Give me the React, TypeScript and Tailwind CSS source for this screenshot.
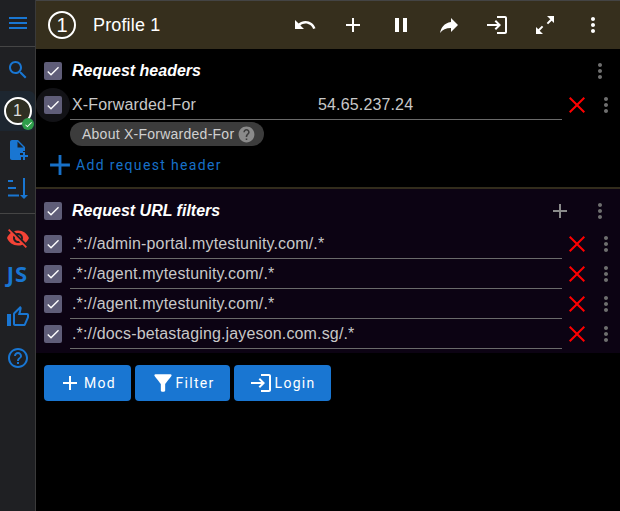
import type { ReactNode } from "react";

const paths = {
  menu: "M3 18h18v-2H3v2zm0-5h18v-2H3v2zm0-7v2h18V6H3z",
  search:
    "M15.5 14h-.79l-.28-.27C15.41 12.59 16 11.11 16 9.5 16 5.91 13.09 3 9.5 3S3 5.91 3 9.5 5.91 16 9.5 16c1.61 0 3.09-.59 4.23-1.57l.27.28v.79l5 4.99L20.49 19l-4.99-5zm-6 0C7.01 14 5 11.99 5 9.5S7.01 5 9.5 5 14 7.01 14 9.5 11.99 14 9.5 14z",
  undo: "M12.5 8c-2.65 0-5.05.99-6.9 2.6L2 7v9h9l-3.62-3.62c1.39-1.16 3.16-1.88 5.12-1.88 3.54 0 6.55 2.31 7.6 5.5l2.37-.78C21.08 11.03 17.15 8 12.5 8z",
  add: "M19 13h-6v6h-2v-6H5v-2h6V5h2v6h6v2z",
  pause: "M6 19h4V5H6v14zm8-14v14h4V5h-4z",
  forward: "M14 9V5l7 7-7 7v-4.1c-5 0-8.5 1.6-11 5.1 1-5 4-10 11-11z",
  login:
    "M11 7 9.6 8.4l2.6 2.6H2v2h10.2l-2.6 2.6L11 17l5-5-5-5zm9 12h-8v2h8c1.1 0 2-.9 2-2V5c0-1.1-.9-2-2-2h-8v2h8v14z",
  expand: "M14 3h7v7l-2.3-2.3-3.6 3.6-1.4-1.4 3.6-3.6zM10 21H3v-7l2.3 2.3 3.6-3.6 1.4 1.4-3.6 3.6z",
  more: "M12 8c1.1 0 2-.9 2-2s-.9-2-2-2-2 .9-2 2 .9 2 2 2zm0 2c-1.1 0-2 .9-2 2s.9 2 2 2 2-.9 2-2-.9-2-2-2zm0 6c-1.1 0-2 .9-2 2s.9 2 2 2 2-.9 2-2-.9-2-2-2z",
  close: "M20 5.4 18.6 4 12 10.6 5.4 4 4 5.4l6.6 6.6L4 18.6 5.4 20l6.6-6.6 6.6 6.6 1.4-1.4-6.6-6.6z",
  noteAdd:
    "M12 2H6c-1.1 0-2 .9-2 2v16c0 1.1.9 2 2 2h9v-3h-1v-4h3v-2h2V9l-7-7zm-.5 7.5V3.5l6 6h-6zM19 14h-2v3h-3v2h3v3h2v-3h3v-2h-3z",
  sort: "M2 4h5v2H2zM2 11h8v2H2zM2 18.5h11v2H2zM17 2h2v17h3l-4 4-4-4h3z",
  eyeOff:
    "M12 7c2.76 0 5 2.24 5 5 0 .65-.13 1.26-.36 1.83l2.92 2.92c1.51-1.26 2.7-2.89 3.43-4.75-1.73-4.39-6-7.5-11-7.5-1.4 0-2.74.25-3.98.7l2.16 2.16C10.74 7.13 11.35 7 12 7zM2 4.27l2.28 2.28.46.46C3.08 8.3 1.78 10.02 1 12c1.73 4.39 6 7.5 11 7.5 1.55 0 3.03-.3 4.38-.84l.42.42L19.73 22 21 20.73 3.27 3 2 4.27zM7.53 9.8l1.55 1.55c-.05.21-.08.43-.08.65 0 1.66 1.34 3 3 3 .22 0 .44-.03.65-.08l1.55 1.55c-.67.33-1.41.53-2.2.53-2.76 0-5-2.24-5-5 0-.79.2-1.53.53-2.2zm4.31-.78 3.15 3.15.02-.16c0-1.66-1.34-3-3-3l-.17.01z",
  thumb:
    "M9 21h9c.83 0 1.54-.5 1.84-1.22l3.02-7.05c.09-.23.14-.47.14-.73v-2c0-1.1-.9-2-2-2h-6.31l.95-4.57.03-.32c0-.41-.17-.79-.44-1.06L14.17 1 7.58 7.59C7.22 7.95 7 8.45 7 9v10c0 1.1.9 2 2 2zM9 9l4.34-4.34L12 10h9v2l-3 7H9V9zM1 9h4v12H1z",
  help: "M11 18h2v-2h-2v2zm1-16C6.48 2 2 6.48 2 12s4.48 10 10 10 10-4.48 10-10S17.52 2 12 2zm0 18c-4.41 0-8-3.59-8-8s3.59-8 8-8 8 3.59 8 8-3.59 8-8 8zm0-14c-2.21 0-4 1.79-4 4h2c0-1.1.9-2 2-2s2 .9 2 2c0 2-3 1.75-3 5h2c0-2.25 3-2.5 3-5 0-2.21-1.79-4-4-4z",
  helpSolid:
    "M12 2C6.48 2 2 6.48 2 12s4.48 10 10 10 10-4.48 10-10S17.52 2 12 2zm1 17h-2v-2h2v2zm2.07-7.75-.9.92C13.45 12.9 13 13.5 13 15h-2v-.5c0-1.1.45-2.1 1.17-2.83l1.24-1.26c.37-.36.59-.86.59-1.41 0-1.1-.9-2-2-2s-2 .9-2 2H8c0-2.21 1.79-4 4-4s4 1.79 4 4c0 .88-.36 1.68-.93 2.25z",
  filter:
    "M4.25 5.61C6.27 8.2 10 13 10 13v6c0 .55.45 1 1 1h2c.55 0 1-.45 1-1v-6s3.72-4.8 5.74-7.39c.51-.66.04-1.61-.79-1.61H5.04c-.83 0-1.3.95-.79 1.61z",
  check: "M9 16.2 4.8 12l-1.4 1.4L9 19 21 7l-1.4-1.4L9 16.2z",
};

function Icon({ d, className }: { d: string; className?: string }) {
  return (
    <svg viewBox="0 0 24 24" fill="currentColor" className={`shrink-0 ${className ?? ""}`}>
      <path d={d} />
    </svg>
  );
}

function Checkbox() {
  return (
    <div className="flex h-[18px] w-[18px] shrink-0 items-center justify-center rounded-[2px] bg-[#5f5d78] text-white">
      <Icon d={paths.check} className="h-[16px] w-[16px]" />
    </div>
  );
}

function Dots({ className }: { className?: string }) {
  return <Icon d={paths.more} className={`h-6 w-6 text-[#6f6f6f] ${className ?? ""}`} />;
}

function RemoveButton() {
  return <Icon d={paths.close} className="ml-[3px] h-6 w-6 text-[#f00]" />;
}

function SectionHead({ title, action }: { title: string; action?: ReactNode }) {
  return (
    <div className="flex h-[30px] items-center pl-2">
      <Checkbox />
      <span className="ml-[10px] text-base font-bold italic text-white">{title}</span>
      <div className="flex-1" />
      {action}
      <Dots className="ml-[16px] mr-2" />
    </div>
  );
}

function Row({ name, value, highlight }: { name: string; value?: string; highlight?: boolean }) {
  return (
    <div className="flex h-[30px] items-center pl-2">
      <div className="relative flex h-[18px] w-[18px] shrink-0 items-center justify-center">
        {highlight && <div className="absolute -inset-[8px] rounded-full bg-[#121216]" />}
        <div className="relative">
          <Checkbox />
        </div>
      </div>
      <div className="ml-2 flex h-[30px] w-[492px] items-center whitespace-nowrap border-b border-[#6a6a6a] pt-[1px] pl-[2px] text-base tracking-[0.15px] text-[#c8c8c8]">
        <span className="w-[246px]">{name}</span>
        {value && <span>{value}</span>}
      </div>
      <RemoveButton />
      <Dots className="ml-[5px]" />
    </div>
  );
}

function Blue({ icon, label, width, iconClass }: { icon: string; label: string; width: string; iconClass?: string }) {
  return (
    <button className={`flex h-9 items-center justify-center rounded-[4px] bg-[#1976d2] pr-[1px] font-['Roboto',sans-serif] text-sm tracking-[1.25px] text-white ${width}`}>
      <Icon d={icon} className={iconClass ?? "mr-[2px] h-6 w-6"} />
      {label}
    </button>
  );
}

const side = "mx-auto h-6 w-6 text-[#1976d2]";

export default function App() {
  return (
    <div className="flex h-[511px] w-[620px] overflow-hidden bg-black font-['Liberation_Sans',sans-serif]">
      <div className="flex w-[36px] shrink-0 flex-col border-r border-[#3a3a3a] bg-[#1f2023]">
        <div className="flex h-[47px] items-center border-b border-[#454545]">
          <Icon d={paths.menu} className={side} />
        </div>
        <div className="flex h-[44px] items-center pt-[1px]">
          <Icon d={paths.search} className={side} />
        </div>
        <div className="relative flex h-[40px] items-center justify-center rounded-r-md bg-[#1d2630]">
          <div className="flex h-[28px] w-[28px] items-center justify-center rounded-full border-2 border-white bg-[#2f2f22] text-base text-[#dddddd]">
            1
          </div>
          <div className="absolute bottom-[1px] right-[1px] flex h-[12px] w-[12px] items-center justify-center rounded-full bg-[#2e9e4a] text-white">
            <Icon d={paths.check} className="h-[9px] w-[9px]" />
          </div>
        </div>
        <div className="flex h-[38px] items-center">
          <Icon d={paths.noteAdd} className={side} />
        </div>
        <div className="flex h-[45px] items-start border-b border-[#454545] pt-[7px]">
          <Icon d={paths.sort} className={side} />
        </div>
        <div className="mt-[4px] flex h-[40px] items-center">
          <Icon d={paths.eyeOff} className="mx-auto h-6 w-6 text-[#f44336]" />
        </div>
        <div className="flex h-[36px] items-center justify-center pb-[6px] font-['Open_Sans',sans-serif] text-[22px] font-bold tracking-[1px] text-[#1976d2]">
          JS
        </div>
        <div className="flex h-[46px] items-center">
          <Icon d={paths.thumb} className={side} />
        </div>
        <div className="flex h-[35px] items-center">
          <Icon d={paths.help} className={side} />
        </div>
      </div>

      <div className="flex min-w-0 flex-1 flex-col">
        <div className="flex h-[49px] shrink-0 items-center border-t border-[#444444] bg-[#362f1d] pl-[12px] text-white">
          <div className="flex h-[28px] w-[28px] items-center justify-center rounded-full border-2 border-white text-xl">
            1
          </div>
          <span className="ml-[17px] text-lg tracking-[0.15px]">Profile 1</span>
          <div className="ml-auto flex pr-[3px]">
            {[paths.undo, paths.add, paths.pause, paths.forward, paths.login, paths.expand, paths.more].map((d) => (
              <div key={d} className="flex w-[48px] items-center justify-center">
                <Icon d={d} className="h-6 w-6" />
              </div>
            ))}
          </div>
        </div>

        <div className="border-b-2 border-[#322c1c] pb-[9px] pt-[7px]">
          <SectionHead title="Request headers" />
          <div className="mt-[4px]">
            <Row name="X-Forwarded-For" value="54.65.237.24" highlight />
          </div>
          <div className="ml-[34px] mt-[2px] flex h-[24px] w-[194px] items-center whitespace-nowrap rounded-full bg-[#3c3c3c] pl-[12px] text-sm tracking-[0.25px] text-[#d0d0d0]">
            About X-Forwarded-For
            <Icon d={paths.helpSolid} className="ml-[3px] h-[19px] w-[19px] text-[#8a8a8a]" />
          </div>
          <div className="ml-[7px] mt-[6px] flex h-[26px] items-center font-['Roboto',sans-serif] text-sm tracking-[1.35px] text-[#1770c8]">
            <Icon d={paths.add} className="h-[34px] w-[34px]" />
            <span className="-ml-[1px]">Add request header</span>
          </div>
        </div>

        <div className="bg-[#0c0313] pb-[4px] pt-[7px]">
          <SectionHead
            title="Request URL filters"
            action={<Icon d={paths.add} className="h-6 w-6 text-[#8a8a8a]" />}
          />
          <div className="mt-[3px]">
            <Row name=".*://admin-portal.mytestunity.com/.*" />
            <Row name=".*://agent.mytestunity.com/.*" />
            <Row name=".*://agent.mytestunity.com/.*" />
            <Row name=".*://docs-betastaging.jayeson.com.sg/.*" />
          </div>
        </div>

        <div className="ml-2 mt-3 flex gap-1">
          <Blue icon={paths.add} label="Mod" width="w-[87px]" />
          <Blue icon={paths.filter} label="Filter" width="w-[95px]" iconClass="h-[26px] w-[26px]" />
          <Blue icon={paths.login} label="Login" width="w-[97px]" />
        </div>
      </div>
    </div>
  );
}
